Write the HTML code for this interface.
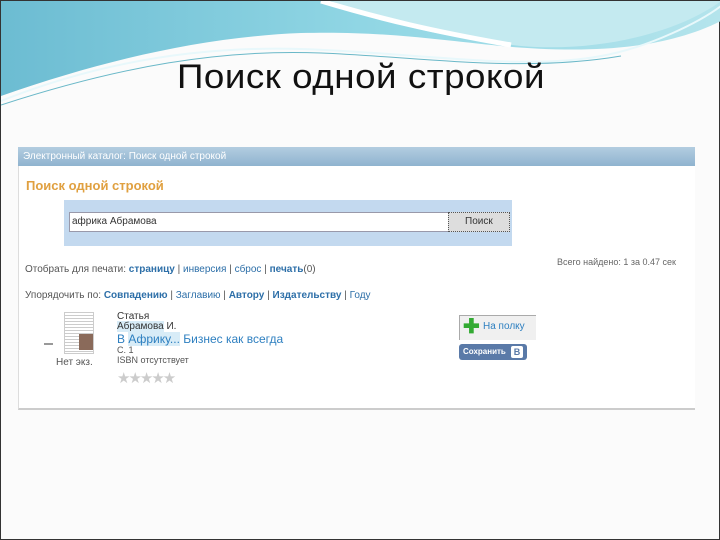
<!DOCTYPE html>
<html><head><meta charset="utf-8"><style>
*{margin:0;padding:0;box-sizing:border-box}
body{width:720px;height:540px;overflow:hidden;background:#fbfbfb;font-family:"Liberation Sans",sans-serif;position:relative;border:1px solid #333}
.a{position:absolute}
.t{font-size:10px;color:#555;white-space:nowrap}
.l{color:#2d6fa8}
.b{font-weight:bold}
</style></head><body>
<svg class="a" style="left:0;top:0" width="720" height="110" viewBox="0 0 720 110">
<defs><linearGradient id="g" x1="0" x2="1"><stop offset="0" stop-color="#6cbcd2"/><stop offset="0.5" stop-color="#90d6e4"/><stop offset="1" stop-color="#b4e4ec"/></linearGradient></defs>
<path d="M0 0H720V20C650 55 560 50 500 45C430 38 380 30 300 32C200 36 100 60 0 95Z" fill="url(#g)"/>
<path d="M330 0C380 20 430 35 520 45C600 52 680 30 720 0Z" fill="#c4eaf0"/>
<path d="M320 0C380 18 430 30 510 44" stroke="#fff" stroke-width="5" fill="none"/>
<path d="M0 100C100 60 200 45 300 48C420 52 520 70 600 55C650 46 700 20 720 5" stroke="#e8f8fb" stroke-width="2" fill="none"/>
<path d="M0 104C120 65 220 48 320 52C420 56 520 72 620 55" stroke="#6ab8c8" stroke-width="1" fill="none"/>
</svg>
<div class="a" style="left:0;width:720px;top:57px;text-align:center;font-size:34px;color:#111;letter-spacing:0.5px;transform:scaleX(1.08)">Поиск одной строкой</div>
<div class="a" style="left:17px;top:146px;width:677px;height:263px;background:#fff;border-bottom:2px solid #ccc;border-left:1px solid #ddd"></div>
<div class="a" style="left:17px;top:146px;width:677px;height:19px;background:linear-gradient(#b3cde0,#8fb3cf)"></div>
<div class="a t" style="left:22px;top:150px;color:#fff">Электронный каталог: Поиск одной строкой</div>
<div class="a" style="left:25px;top:177px;font-size:13px;font-weight:bold;color:#e0a040">Поиск одной строкой</div>
<div class="a" style="left:63px;top:199px;width:448px;height:46px;background:#c3d9ef"></div>
<div class="a" style="left:68px;top:211px;width:380px;height:20px;background:#fff;border:1px solid #99a"></div>
<div class="a t" style="left:71px;top:215px;color:#333">африка Абрамова</div>
<div class="a" style="left:447px;top:211px;width:62px;height:20px;background:#ddd;border:1px dotted #555"></div>
<div class="a t" style="left:464px;top:215px;color:#333">Поиск</div>
<div class="a t" style="left:556px;top:256px;color:#666;font-size:9px">Всего найдено: 1 за 0.47 сек</div>
<div class="a t" style="left:24px;top:263px">Отобрать для печати: <span class="l b">страницу</span> | <span class="l">инверсия</span> | <span class="l">сброс</span> | <span class="l b">печать</span>(0)</div>
<div class="a t" style="left:24px;top:289px">Упорядочить по: <span class="l b">Совпадению</span> | <span class="l">Заглавию</span> | <span class="l b">Автору</span> | <span class="l b">Издательству</span> | <span class="l">Году</span></div>
<div class="a" style="left:43px;top:342px;width:9px;height:2px;background:#999"></div>
<div class="a" style="left:63px;top:311px;width:30px;height:42px;background:repeating-linear-gradient(#fff 0 2px,#ccc 2px 3px);border:1px solid #ccc"></div>
<div class="a" style="left:78px;top:333px;width:14px;height:16px;background:#8a6a5a"></div>
<div class="a t" style="left:55px;top:356px;color:#555">Нет экз.</div>
<div class="a t" style="left:116px;top:310px;color:#333">Статья</div>
<div class="a t" style="left:116px;top:320px;color:#333"><span style="background:#d8ecf7">Абрамова</span> И.</div>
<div class="a" style="left:116px;top:331px;font-size:12px;color:#2d7fc0;white-space:nowrap">В <span style="background:#d8ecf7">Африку...</span> Бизнес как всегда</div>
<div class="a t" style="left:116px;top:344px;font-size:9px">С. 1</div>
<div class="a t" style="left:116px;top:354px;font-size:9px">ISBN отсутствует</div>
<div class="a" style="left:116px;top:368px;font-size:15px;color:#ccc;letter-spacing:-2px">★★★★★</div>
<div class="a" style="left:458px;top:314px;width:77px;height:25px;background:#f0f0f0;border-left:1px solid #aaa;border-top:1px solid #aaa"></div>
<div class="a" style="left:462px;top:317px;font-size:20px;line-height:18px;font-weight:bold;color:#3a3">✚</div>
<div class="a t" style="left:482px;top:320px;color:#2d7fc0">На полку</div>
<div class="a" style="left:458px;top:343px;width:68px;height:16px;background:#5a7aa8;border-radius:3px"></div>
<div class="a" style="left:462px;top:346px;font-size:8px;color:#fff;font-weight:bold">Сохранить</div>
<div class="a" style="left:510px;top:345px;width:12px;height:12px;background:#fff;border-radius:2px;font-size:9px;font-weight:bold;color:#5a7aa8;text-align:center;line-height:12px">B</div>
</body></html>
